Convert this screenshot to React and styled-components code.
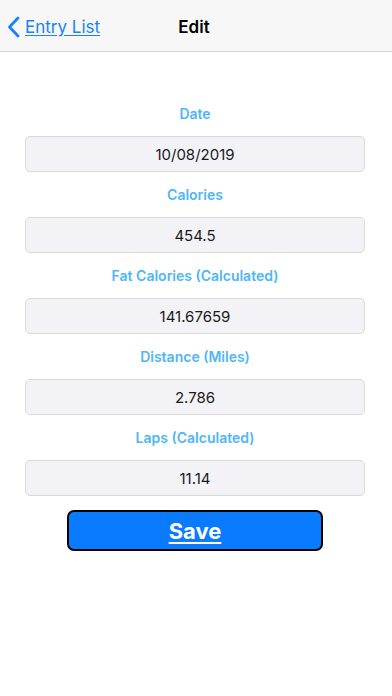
import React from 'react'
import styled, { createGlobalStyle } from 'styled-components'

const GlobalStyle = createGlobalStyle`
    html, body {
        margin: 0;
        padding: 0;
        background: #ffffff;
        font-family: Inter, "Liberation Sans", Arial, sans-serif;
    }
`

const Screen = styled.div`
    width: 392px;
    height: 696px;
    display: flex;
    flex-direction: column;
    background: #ffffff;
`

const NavBar = styled.header`
    box-sizing: border-box;
    height: 52px;
    padding-top: 3px;
    background: #f7f7f7;
    border-bottom: 1px solid #d6d6d6;
    display: grid;
    grid-template-columns: 1fr auto 1fr;
    align-items: center;
`

const BackLink = styled.a`
    display: flex;
    align-items: center;
    gap: 5px;
    padding-left: 7px;
    color: #1a82fb;
    font-size: 17px;
    text-decoration: underline;
    text-underline-offset: 2px;
    cursor: pointer;
`

const Title = styled.h1`
    margin: 0 4px 0 0;
    font-size: 17px;
    font-weight: 600;
    color: #000000;
`

const Form = styled.main`
    display: flex;
    flex-direction: column;
    align-items: center;
    padding: 53px 2px 0 0;
`

const Field = styled.div`
    display: flex;
    flex-direction: column;
    align-items: center;
    gap: 14px;
    margin-bottom: 14px;
`

const Label = styled.label`
    font-size: 14px;
    font-weight: 600;
    line-height: 17px;
    color: #4fb6f7;
`

const Input = styled.input`
    box-sizing: border-box;
    width: 340px;
    height: 36px;
    border: 1px solid #dadada;
    border-radius: 5px;
    background: #f2f2f7;
    text-align: center;
    font-family: Inter, "Liberation Sans", Arial, sans-serif;
    font-size: 15px;
    color: #1a1a1a;
    outline: none;
`

const SaveButton = styled.button`
    box-sizing: border-box;
    width: 256px;
    height: 41px;
    background: #0a7afe;
    border: 2px solid #000000;
    border-radius: 7px;
    color: #ffffff;
    font-family: Inter, "Liberation Sans", Arial, sans-serif;
    font-size: 22px;
    font-weight: 700;
    text-decoration: underline;
    text-underline-offset: 3px;
    cursor: pointer;
`

const fields = [
    { label: 'Date', value: '10/08/2019' },
    { label: 'Calories', value: '454.5' },
    { label: 'Fat Calories (Calculated)', value: '141.67659' },
    { label: 'Distance (Miles)', value: '2.786' },
    { label: 'Laps (Calculated)', value: '11.14' },
]

function Chevron() {
    return (
        <svg width="13" height="22" viewBox="0 0 13 22">
            <path d="M11 2 L2.5 11 L11 20" fill="none" stroke="#1a82fb" strokeWidth="2.8" strokeLinecap="round" strokeLinejoin="round" />
        </svg>
    )
}

export default function App() {
    return (
        <Screen>
            <GlobalStyle />
            <NavBar>
                <BackLink>
                    <Chevron />
                    Entry List
                </BackLink>
                <Title>Edit</Title>
                <div />
            </NavBar>
            <Form>
                {fields.map(f => (
                    <Field key={f.label}>
                        <Label>{f.label}</Label>
                        <Input defaultValue={f.value} />
                    </Field>
                ))}
                <SaveButton>Save</SaveButton>
            </Form>
        </Screen>
    )
}
